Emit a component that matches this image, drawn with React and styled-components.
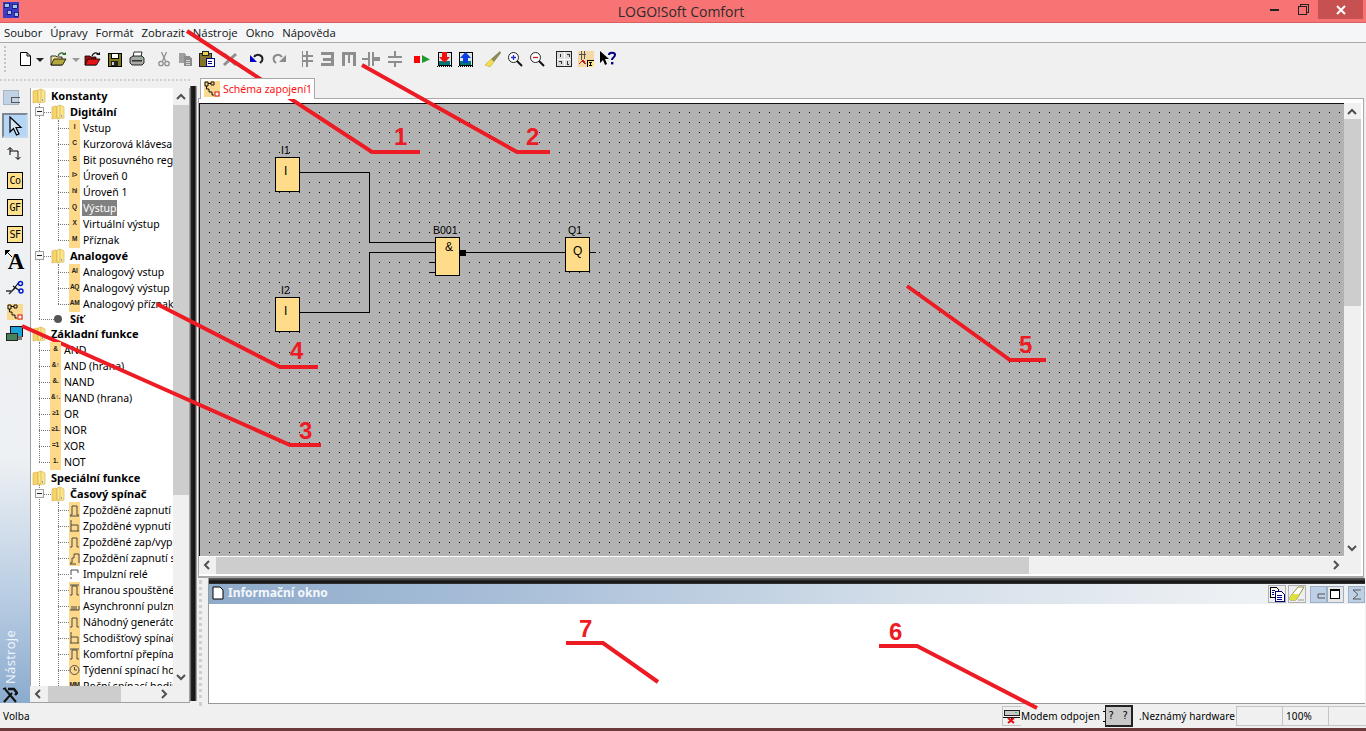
import styled, { createGlobalStyle } from 'styled-components';

const GlobalStyle = createGlobalStyle`
  html, body { margin: 0; padding: 0; height: 100%; overflow: hidden; background: #f0f0f0; }
  * { box-sizing: border-box; }
`;

const uiFont = `"Open Sans", "Noto Sans", "Liberation Sans", sans-serif`;
const treeFont = `"Noto Sans", "Liberation Sans", sans-serif`;

const Window = styled.div`
  position: relative;
  width: 1366px;
  height: 731px;
  display: flex;
  flex-direction: column;
  overflow: hidden;
  font-family: ${uiFont};
  color: #000;
`;

/* ---------- title + menu ---------- */
const TitleBar = styled.div`
  height: 23px;
  flex: none;
  background: #f87373;
  border-bottom: 1px solid #d85f5f;
  display: flex;
  align-items: flex-start;
  position: relative;
`;
const AppIcon = styled.svg`
  width: 16px;
  height: 16px;
  margin: 2px 0 0 3px;
`;
const TitleText = styled.div`
  position: absolute;
  left: 0;
  right: 4px;
  top: 2px;
  text-align: center;
  font-size: 14px;
  line-height: 19px;
  color: #2c2c2c;
`;
const WinButtons = styled.div`
  margin-left: auto;
  margin-right: 3px;
  display: flex;
  position: relative;
`;
const WinButton = styled.div`
  width: ${(p) => p.$w}px;
  height: 19px;
  display: flex;
  align-items: center;
  justify-content: center;
  background: ${(p) => (p.$close ? '#c75050' : 'transparent')};
`;
const MenuBar = styled.div`
  height: 20px;
  flex: none;
  background: #f5f6f8;
  border-bottom: 1px solid #a9a9a9;
  display: flex;
  align-items: center;
  padding-left: 4px;
  gap: 8px;
  font-size: 11.3px;
`;
const MenuItem = styled.span`
  line-height: 18px;
  color: #111;
`;
const Toolbar = styled.div`
  height: 35px;
  flex: none;
  background: #f0f0f0;
  display: flex;
  align-items: flex-start;
  padding-top: 8px;
  position: relative;
`;
const Grip = styled.div`
  position: absolute;
  left: 4px;
  top: 3px;
  width: 2px;
  height: 26px;
  border-left: 2px dotted #c4c4c4;
`;
const Tool = styled.span`
  flex: none;
  display: block;
  width: ${(p) => p.$w}px;
  height: 16px;
  margin-left: ${(p) => p.$gap}px;
  svg { display: block; width: 100%; height: 100%; }
`;

/* ---------- workspace ---------- */
const Workspace = styled.div`
  flex: 1;
  display: flex;
  min-height: 0;
  background: #f0f0f0;
`;
const LeftPane = styled.div`
  width: 190px;
  flex: none;
  display: flex;
  flex-direction: column;
`;
const DotStrip = styled.div`
  height: 10px;
  flex: none;
  margin-top: 1px;
  border-top: 2px dotted #cfcfcf;
`;
const LeftBody = styled.div`
  flex: 1;
  display: flex;
  min-height: 0;
  margin-bottom: 3px;
  margin-top: -1px;
`;
const Rail = styled.div`
  width: 30px;
  flex: none;
  display: flex;
  flex-direction: column;
  padding-top: 2px;
  background: linear-gradient(#f0f0f0 0, #eef1f4 60%, #b6cbe2 84%, #8babce 100%);
`;
const Collapse = styled.div`
  width: 16px;
  height: 15px;
  margin: 0 0 8px 3px;
  background: #c3d3e6;
  border: 1px solid #a6b4c6;
  position: relative;
  &::after {
    content: '';
    position: absolute;
    left: 7px;
    top: 6px;
    width: 8px;
    height: 4px;
    border: 1px solid #555;
    border-right: none;
  }
`;
const RailButton = styled.div`
  width: 26px;
  height: ${(p) => p.$h}px;
  margin-left: 2px;
  display: flex;
  align-items: center;
  justify-content: center;
  position: relative;
  background: ${(p) => (p.$active ? '#b4d5f5' : 'transparent')};
  border: ${(p) => (p.$active ? '2px solid' : 'none')};
  border-color: #7d8793 #c5d9ee #c5d9ee #7d8793;
`;
const CodeBox = styled.div`
  width: 16px;
  height: 17px;
  background: #ffe08c;
  border: 1px solid #000;
  font-family: "DejaVu Sans Mono", monospace;
  font-size: 10px;
  line-height: 15px;
  text-align: center;
  letter-spacing: -0.5px;
`;
const TextToolA = styled.span`
  font-family: "Liberation Serif", serif;
  font-weight: bold;
  font-size: 23px;
  line-height: 20px;
  margin-left: 2px;
`;
const RailLabel = styled.div`
  margin-top: auto;
  writing-mode: vertical-rl;
  transform: rotate(180deg);
  color: #f2f6fb;
  font-size: 13px;
  line-height: 16px;
  margin-left: 2px;
  letter-spacing: 0.3px;
  margin-bottom: 2px;
`;
const RailFoot = styled.div`
  height: 17px;
  padding-left: 2px;
  flex: none;
`;
const TreePanel = styled.div`
  width: 160px;
  flex: none;
  display: grid;
  grid-template-columns: 143px 16px;
  grid-template-rows: 1fr 16px;
  background: #fff;
  border-right: 1px solid #a0a0a0;
  border-bottom: 1px solid #a0a0a0;
  box-shadow: inset 1px 0 0 #a0a0a0;
`;
const TreeBody = styled.div`
  position: relative;
  overflow: hidden;
  font-family: ${treeFont};
  font-size: 10.5px;
  min-width: 0;
`;
const VGuide = styled.div`
  position: absolute;
  left: ${(p) => p.$x}px;
  top: ${(p) => p.$top}px;
  height: ${(p) => p.$h}px;
  border-left: 1px dotted #777;
`;
const Row = styled.div`
  position: relative;
  height: ${(p) => p.$h || 16}px;
  display: flex;
  align-items: center;
  white-space: nowrap;
  padding-left: ${(p) => p.$pad}px;
  &::before {
    content: '';
    display: ${(p) => (p.$elbow ? 'block' : 'none')};
    position: absolute;
    left: ${(p) => p.$elbow}px;
    top: ${(p) => (p.$h || 16) / 2}px;
    width: ${(p) => p.$elbowW}px;
    border-top: 1px dotted #777;
  }
`;
const RowLabel = styled.span`
  margin-left: ${(p) => p.$ml}px;
  font-weight: ${(p) => (p.$bold ? 700 : 400)};
  font-size: ${(p) => (p.$bold ? '11px' : '10.5px')};
  line-height: 16px;
  padding: 0 ${(p) => (p.$selected ? 1 : 0)}px;
  background: ${(p) => (p.$selected ? '#808080' : 'transparent')};
  color: ${(p) => (p.$selected ? '#fff' : '#000')};
`;
const FolderSvg = styled.svg`
  width: 14px;
  height: 16px;
  flex: none;
`;
const Expander = styled.span`
  position: absolute;
  left: 5px;
  top: 3px;
  width: 9px;
  height: 9px;
  background: #f6f6f6;
  border: 1px solid #a0a0a0;
  &::after {
    content: '';
    position: absolute;
    left: 1px;
    top: 3px;
    width: 5px;
    height: 1px;
    background: #222;
  }
`;
const NetDot = styled.span`
  position: absolute;
  left: 24px;
  top: 3px;
  width: 8px;
  height: 8px;
  border-radius: 50%;
  background: #555;
`;
const BlockIcon = styled.span`
  flex: none;
  width: 11px;
  height: 16px;
  background: ${(p) => (p.$plain ? '#fff' : '#ffd98a')};
  display: flex;
  align-items: center;
  justify-content: center;
  font-family: "Liberation Sans", sans-serif;
  font-size: 6.5px;
  font-weight: bold;
  color: #222;
  letter-spacing: -0.3px;
  padding-bottom: 3px;
  position: relative;
  z-index: 1;
  svg { width: 11px; height: 14px; margin-top: 3px; }
`;
const ScrollTrack = styled.div`
  background: #f0f0f0;
  display: flex;
  flex-direction: ${(p) => (p.$horizontal ? 'row' : 'column')};
  align-items: stretch;
  position: relative;
  min-width: 0;
  min-height: 0;
`;
const ScrollThumb = styled.div`
  position: absolute;
  background: #cdcdcd;
  left: ${(p) => (p.$horizontal ? `${p.$from}px` : '0')};
  right: ${(p) => (p.$horizontal ? 'auto' : '0')};
  top: ${(p) => (p.$horizontal ? '0' : `${p.$from}px`)};
  bottom: ${(p) => (p.$horizontal ? '0' : 'auto')};
  width: ${(p) => (p.$horizontal ? `${p.$size}px` : 'auto')};
  height: ${(p) => (p.$horizontal ? 'auto' : `${p.$size}px`)};
`;
const ScrollArrow = styled.svg`
  position: absolute;
  width: 10px;
  height: 10px;
  ${(p) => p.$place}
`;
const Corner = styled.div`
  background: #f0f0f0;
`;
const Splitter = styled.div`
  width: 8px;
  flex: none;
  margin: 8px 0 5px;
  background: linear-gradient(90deg, #8a8a8a 0, #222 18%, #111 55%, #666 75%, #f0f0f0 90%);
`;
const RightPane = styled.div`
  flex: 1;
  min-width: 0;
  display: flex;
  flex-direction: column;
`;
const TabRow = styled.div`
  height: 20px;
  flex: none;
  padding-left: 2px;
  display: flex;
`;
const Tab = styled.div`
  width: 115px;
  height: 21px;
  background: #fff;
  border: 1px solid #a8a8a8;
  border-bottom: none;
  display: flex;
  align-items: center;
  padding-left: 3px;
  gap: 3px;
  position: relative;
  z-index: 1;
  font-family: ${treeFont};
  font-size: 10.5px;
  color: #ff1010;
  white-space: nowrap;
`;
const TabIcon = styled.svg`
  width: 16px;
  height: 16px;
  flex: none;
`;
const Frame = styled.div`
  height: 480px;
  flex: none;
  margin-right: 2px;
  border: 1px solid #a8a8a8;
  border-bottom: none;
  background: #fff;
  padding: 4px 2px 4px 0;
  display: grid;
  grid-template-columns: 1fr 17px;
  grid-template-rows: 1fr 17px;
  box-shadow: inset 0 -2px 0 #a8a8a8;
`;
const Canvas = styled.div`
  position: relative;
  background: #b2b2b2;
  border-top: 1px solid #111;
  border-left: 1px solid #111;
  overflow: hidden;
  min-width: 0;
  margin-bottom: 1px;
`;
const CanvasArt = styled.svg`
  position: absolute;
  left: 0;
  top: 0;
  width: 100%;
  height: 100%;
`;
const FnBlock = styled.div`
  position: absolute;
  left: ${(p) => p.$x}px;
  top: ${(p) => p.$y}px;
  width: 25px;
  height: ${(p) => p.$h}px;
  background: #ffdc8a;
  border: 1px solid #000;
  font-family: "Liberation Sans", sans-serif;
  font-size: 12px;
  line-height: 14px;
  padding-top: ${(p) => p.$pt}px;
  padding-left: ${(p) => p.$pl}px;
`;
const FnLabel = styled.span`
  position: absolute;
  left: ${(p) => p.$x}px;
  top: ${(p) => p.$y}px;
  font-family: "Liberation Sans", sans-serif;
  font-size: 10.5px;
  line-height: 11px;
`;

/* ---------- info window ---------- */
const InfoRow = styled.div`
  flex: 1;
  display: flex;
  min-height: 0;
`;
const InfoGrip = styled.div`
  width: 10px;
  flex: none;
  margin-top: 2px;
  border-left: 3px dotted #cfcfcf;
  margin-left: 1px;
`;
const InfoPanel = styled.div`
  flex: 1;
  min-width: 0;
  display: flex;
  flex-direction: column;
  margin-left: -1px;
  margin-right: 1px;
  margin-bottom: 2px;
  border-left: 1px solid #999;
  border-bottom: 1px solid #999;
`;
const InfoEdge = styled.div`
  height: 6px;
  flex: none;
  background: linear-gradient(#666, #111 60%, #333);
`;
const InfoTitle = styled.div`
  height: 20px;
  flex: none;
  display: flex;
  align-items: center;
  padding: 0 0 3px 3px;
  background: linear-gradient(90deg, #8fabca 0, #a7bed8 25%, #d3dee9 60%, #eef1f4 90%);
  color: #f4f7fb;
  font-family: ${treeFont};
  font-weight: 700;
  font-size: 12px;
  gap: 4px;
`;
const InfoButtons = styled.div`
  margin-left: auto;
  display: flex;
  align-items: center;
  gap: 2px;
  margin-top: 3px;
`;
const InfoTool = styled.div`
  width: 18px;
  height: 18px;
  border: 1px solid #b0b0b0;
  background: #eee;
  svg { display: block; width: 16px; height: 16px; }
`;
const InfoWinButton = styled.div`
  width: 17px;
  height: 17px;
  background: #bdd0e6;
  border: 1px solid #9fb0c4;
  margin-left: ${(p) => p.$ml}px;
  position: relative;
  svg { position: absolute; left: 0; top: 0; width: 15px; height: 15px; }
`;
const InfoBody = styled.div`
  flex: 1;
  background: #fff;
`;

/* ---------- status ---------- */
const StatusBar = styled.div`
  height: 22px;
  flex: none;
  background: #f0f0f0;
  display: flex;
  align-items: flex-start;
  font-family: ${treeFont};
  font-size: 10px;
  letter-spacing: 0.1px;
  line-height: 20px;
  white-space: nowrap;
`;
const StatusText = styled.span`
  padding-left: ${(p) => p.$pl}px;
  width: ${(p) => p.$w}px;
  flex: ${(p) => (p.$grow ? 1 : 'none')};
`;
const StatusCell = styled.div`
  width: ${(p) => p.$w}px;
  height: 20px;
  flex: none;
  display: flex;
  align-items: center;
  padding-left: ${(p) => p.$pl || 0}px;
  border: 1px solid #c4c4c4;
  border-right: none;
`;
const HardwareChip = styled.div`
  width: 28px;
  height: 22px;
  flex: none;
  margin-top: -1px;
  position: relative;
  background: #c8c8c8;
  border: 2px solid #222;
  border-left-width: 1px;
  font-family: "DejaVu Sans Mono", monospace;
  font-size: 10px;
  line-height: 17px;
  text-align: center;
  letter-spacing: 1px;
  &::before {
    content: '';
    position: absolute;
    left: -3px;
    top: 4px;
    width: 2px;
    height: 9px;
    border-top: 1px solid #000;
    border-bottom: 1px solid #000;
  }
`;
const BottomStrip = styled.div`
  height: 3px;
  flex: none;
  background: #6d3a3c;
`;

/* ---------- hand-drawn red annotations ---------- */
const Marks = styled.svg`
  position: absolute;
  left: 0;
  top: 0;
  width: 1366px;
  height: 731px;
  pointer-events: none;
`;
const MarkNumber = styled.text`
  font-family: "Liberation Sans", sans-serif;
  font-weight: bold;
  font-size: 24px;
  fill: #ed1c24;
`;

/* ---------- icons ---------- */
const folder = (
  <FolderSvg viewBox="0 0 14 16">
    <path d="M1 3 L5 2 L6 3 L6 14 L1 15 Z" fill="#f5d46a" stroke="#d3ad48" strokeWidth="0.6" />
    <path d="M6 2 L9 1 L13 3 L13 14 L6 15 Z" fill="#fbe58f" stroke="#d3ad48" strokeWidth="0.6" />
    <path d="M9 1 L9 13 L6 15" fill="none" stroke="#e3c25d" strokeWidth="1" />
    <rect x="10" y="11" width="1" height="2" fill="#7aa7d8" />
  </FolderSvg>
);

const NewIcon = () => (
  <svg viewBox="0 0 14 16"><path d="M2.5 1.5H9L12.5 5V14.5H2.5Z M9 1.5V5H12.5" fill="#fff" stroke="#000" /></svg>
);
const Caret = ({ color }) => (
  <svg viewBox="0 0 8 16"><path d="M0 7H8L4 11Z" fill={color} /></svg>
);
const OpenIcon = ({ body, edge, arrow }) => (
  <svg viewBox="0 0 17 16">
    <path d="M1 5H6L7 6H12V14H1Z" fill={edge} stroke="#000" strokeWidth="0.8" />
    <path d="M1 14L4 8H16L12.5 14Z" fill={body} stroke="#000" strokeWidth="0.8" />
    <path d="M8 5C9 2 12 1 14 3" fill="none" stroke={arrow} strokeWidth="1.2" />
    <path d="M12 4H16V1Z" fill={arrow} />
  </svg>
);
const SaveIcon = () => (
  <svg viewBox="0 0 15 16" shapeRendering="crispEdges">
    <rect x="1" y="2" width="13" height="13" fill="#807a1c" stroke="#000" />
    <rect x="4" y="2" width="7" height="5" fill="#fff" stroke="#000" />
    <rect x="4" y="10" width="7" height="5" fill="#222" />
    <rect x="5" y="11" width="2" height="3" fill="#cfcfcf" />
  </svg>
);
const PrintIcon = () => (
  <svg viewBox="0 0 16 16">
    <path d="M5 1H13L12 6H4Z" fill="#fff" stroke="#000" strokeWidth="0.8" />
    <path d="M1 7L4 5H13L15 7V12L13 14H3L1 12Z" fill="#a8a8a8" stroke="#000" strokeWidth="0.8" />
    <rect x="3" y="9" width="10" height="1.5" fill="#333" />
    <rect x="11" y="7" width="2" height="1" fill="#3bd34a" />
  </svg>
);
const CutIcon = () => (
  <svg viewBox="0 0 14 16" fill="none" stroke="#8e8e8e" strokeWidth="1.3">
    <path d="M4.5 1L8.5 10M9.5 1L5.5 10" />
    <circle cx="4" cy="12.5" r="2.2" />
    <circle cx="10" cy="12.5" r="2.2" />
  </svg>
);
const CopyIcon = () => (
  <svg viewBox="0 0 15 16" shapeRendering="crispEdges">
    <path d="M1 2H6L8 4V12H1Z" fill="#a0a0a0" />
    <path d="M6 5H11L14 8V15H6Z" fill="#8c8c8c" />
    <path d="M8 9H12M8 11H12M8 13H12" stroke="#d5d5d5" />
  </svg>
);
const PasteIcon = () => (
  <svg viewBox="0 0 16 16" shapeRendering="crispEdges">
    <rect x="0" y="2" width="12" height="13" fill="#84742b" stroke="#222" />
    <rect x="3" y="0" width="6" height="4" fill="#e6d44c" stroke="#222" />
    <rect x="7" y="7" width="8" height="8" fill="#fff" stroke="#000080" />
    <path d="M9 10H13M9 12H13" stroke="#000080" />
  </svg>
);
const DeleteIcon = () => (
  <svg viewBox="0 0 16 16"><path d="M2 3L14 14M14 3L2 14" stroke="#8e8e8e" strokeWidth="3" /></svg>
);
const UndoIcon = () => (
  <svg viewBox="0 0 15 16">
    <path d="M4 6C7 2 14 4 12 10L10 12" fill="none" stroke="#222" strokeWidth="2" />
    <path d="M0 4V11H7Z" fill="#0000c8" />
  </svg>
);
const RedoIcon = () => (
  <svg viewBox="0 0 15 16">
    <path d="M11 6C8 2 1 4 3 10L5 12" fill="none" stroke="#8a8a8a" strokeWidth="2" />
    <path d="M15 4V11H8Z" fill="#8a8a8a" />
  </svg>
);
const GrayLogic = ({ d }) => (
  <svg viewBox="0 0 16 16" preserveAspectRatio="none" shapeRendering="crispEdges"><path d={d} fill="#8e8e8e" /></svg>
);
const RunIcon = () => (
  <svg viewBox="0 0 16 16" shapeRendering="crispEdges">
    <rect x="0" y="5" width="6" height="7" fill="#ff0000" />
    <path d="M8 4L16 8.5L8 12Z" fill="#209a30" shapeRendering="auto" />
  </svg>
);
const TransferIcon = ({ color, up }) => (
  <svg viewBox="0 0 15 16" shapeRendering="crispEdges">
    <rect x="1" y="1" width="13" height="13" fill="#dfe8e2" stroke="#000" />
    <rect x="2" y="10" width="11" height="4" fill="#077" />
    <path d="M0 15H15" stroke="#000" strokeDasharray="1 1" />
    <path d={up ? 'M7.5 1L13 7H10V12H5V7H2Z' : 'M5 1H10V6H13L7.5 12L2 6H5Z'} fill={color} shapeRendering="auto" />
  </svg>
);
const BrushIcon = () => (
  <svg viewBox="0 0 16 16">
    <path d="M15 0L6 8L9 11L16 2Z" fill="#8d8a5a" />
    <path d="M6 8L0 14L5 16L9 11Z" fill="#f3dc4e" stroke="#b9a02f" strokeWidth="0.5" />
  </svg>
);
const ZoomIcon = ({ color, plus }) => (
  <svg viewBox="0 0 16 16">
    <circle cx="6.5" cy="6.5" r="5" fill="#fff" stroke="#222" />
    <path d="M10 10L15 15" stroke="#111" strokeWidth="2" />
    <path d={plus ? 'M4 6.5H9M6.5 4V9' : 'M4 6.5H9'} stroke={color} strokeWidth="1.3" />
  </svg>
);
const GridIcon = () => (
  <svg viewBox="0 0 16 16" shapeRendering="crispEdges">
    <rect x="0.5" y="0.5" width="15" height="15" fill="#dcdcdc" stroke="#222" strokeWidth="1" />
    <path d="M8 1V15M1 8H15" stroke="#fff" />
    <path d="M4 3V6M11 3H13V6M3 10H5V13M11 10V13H13" stroke="#333" fill="none" />
  </svg>
);
const SiteIcon = () => (
  <svg viewBox="0 0 16 16" shapeRendering="crispEdges">
    <path d="M0 0H16V16H0Z" fill="#f4d9a4" />
    <path d="M3 0V8M6 0V8M1 3H8M3 8L7 13" stroke="#555" fill="none" />
    <rect x="9" y="9" width="7" height="7" fill="#ffe48a" stroke="#000" />
    <path d="M11 11H14M12.5 11V14M11 14H14" stroke="#000" />
    <path d="M1 13L5 9L8 13" stroke="#e01010" fill="none" />
  </svg>
);
const HelpIcon = () => (
  <svg viewBox="0 0 16 16">
    <path d="M0 0V12L3 9L5 14L7 13L5 8H9Z" fill="#000" />
    <path d="M9 4C9 1 15 1 15 4C15 6.5 12 6 12 9" fill="none" stroke="#000080" strokeWidth="2" />
    <rect x="11" y="11" width="2.4" height="2.4" fill="#000080" />
  </svg>
);
const SchemeIcon = () => (
  <>
    <rect width="16" height="16" fill="#fbd98f" />
    <path d="M1 1H4V5H1Z M7 1H10V4H7Z M4 2.5H7 M2.5 5V8H5V11H8V14H10" fill="none" stroke="#111" />
    <rect x="11" y="11" width="4" height="4" fill="#fff" stroke="#e01010" />
  </>
);

const toolbarItems = [
  { x: 18, w: 14, el: <NewIcon /> },
  { x: 36, w: 8, el: <Caret color="#222" /> },
  { x: 50, w: 17, el: <OpenIcon body="#b3a83e" edge="#f3e9a0" arrow="#2a6a2a" /> },
  { x: 72, w: 8, el: <Caret color="#999" /> },
  { x: 84, w: 17, el: <OpenIcon body="#e51414" edge="#a01010" arrow="#111" /> },
  { x: 107, w: 15, el: <SaveIcon /> },
  { x: 129, w: 16, el: <PrintIcon /> },
  { x: 157, w: 14, el: <CutIcon /> },
  { x: 178, w: 15, el: <CopyIcon /> },
  { x: 199, w: 16, el: <PasteIcon /> },
  { x: 222, w: 16, el: <DeleteIcon /> },
  { x: 250, w: 15, el: <UndoIcon /> },
  { x: 271, w: 15, el: <RedoIcon /> },
  { x: 299, w: 14, el: <GrayLogic d="M3 0H5V4H8V0H10V4H16V6H10V9H16V11H10V16H8V11H5V16H3V0Z M5 6V9H8V6Z" /> },
  { x: 321, w: 13, el: <GrayLogic d="M0 1H16V15H0V12H12V9.5H3V6.5H12V4H0Z" /> },
  { x: 342, w: 14, el: <GrayLogic d="M0 1H16V15H13V4H9.5V12H6.5V4H3V15H0Z" /> },
  { x: 362, w: 18, el: <GrayLogic d="M0 7H5V1H7V15H5V9H0Z M9 1H11V6H16V10H11V15H9Z" /> },
  { x: 387, w: 16, el: <GrayLogic d="M7 0H9V5H15V7H1V5H7Z M1 10H15V12H9V16H7V12H1Z" /> },
  { x: 414, w: 16, el: <RunIcon /> },
  { x: 437, w: 15, el: <TransferIcon color="#ee1111" /> },
  { x: 458, w: 15, el: <TransferIcon color="#0a3ee0" up /> },
  { x: 485, w: 16, el: <BrushIcon /> },
  { x: 507, w: 16, el: <ZoomIcon color="#1f2fd0" plus /> },
  { x: 529, w: 16, el: <ZoomIcon color="#d01f1f" /> },
  { x: 556, w: 16, el: <GridIcon /> },
  { x: 578, w: 16, el: <SiteIcon /> },
  { x: 600, w: 16, el: <HelpIcon /> },
];

/* little pulse glyphs of the timer blocks */
const pulse = (d) => (
  <svg viewBox="0 0 11 14"><path d={d} fill="none" stroke="#4a4a4a" strokeWidth="1" /></svg>
);
const pulses = {
  on: pulse('M1 12H3V3H8V12H10M1 13H10'),
  off: pulse('M2 1V12M2 6H9V12M1 12H10'),
  onOff: pulse('M1 12H3V3H8V12H10'),
  mem: pulse('M1 12H3V7H5V3H10V12M1 13H7'),
  rel: pulse('M2 8V3H9V6M2 10V12'),
  edge: pulse('M1 12H3V3H8V12H10M1 2H10'),
  async: pulse('M1 11H10V7M3 11V7M5 11V7M7 11V7'),
  clock: (
    <svg viewBox="0 0 11 14">
      <circle cx="5.5" cy="7" r="4.5" fill="none" stroke="#4a4a4a" />
      <path d="M5.5 4V7H8" fill="none" stroke="#4a4a4a" />
    </svg>
  ),
};

const Root = ({ children }) => (
  <Row $pad={2}>
    {folder}
    <RowLabel $ml={5} $bold>{children}</RowLabel>
  </Row>
);
const Group = ({ children }) => (
  <Row $pad={21} $elbow={14} $elbowW={7}>
    <Expander />
    {folder}
    <RowLabel $ml={5} $bold>{children}</RowLabel>
  </Row>
);
const Leaf = ({ glyph, plain, selected, children }) => (
  <Row $pad={39} $elbow={28} $elbowW={11}>
    <BlockIcon $plain={plain}>{glyph}</BlockIcon>
    <RowLabel $ml={selected ? 2 : 3} $selected={selected}>{children}</RowLabel>
  </Row>
);
const FnLeaf = ({ glyph, children }) => (
  <Row $pad={20} $elbow={9} $elbowW={11}>
    <BlockIcon>{glyph}</BlockIcon>
    <RowLabel $ml={3}>{children}</RowLabel>
  </Row>
);

const chevron = (dir) =>
  ({
    up: 'M1 7L5 3L9 7',
    down: 'M1 3L5 7L9 3',
    left: 'M7 1L3 5L7 9',
    right: 'M3 1L7 5L3 9',
  })[dir];
const Arrow = ({ dir, place }) => (
  <ScrollArrow viewBox="0 0 10 10" $place={place}>
    <path d={chevron(dir)} fill="none" stroke="#505050" strokeWidth="2" />
  </ScrollArrow>
);

const CX = 200;
const CY = 104;
const blocks = [
  { x: 275, y: 157, h: 35, pt: 6, pl: 8, t: 'I', lx: 281, ly: 145, l: 'I1' },
  { x: 275, y: 297, h: 35, pt: 6, pl: 8, t: 'I', lx: 281, ly: 285, l: 'I2' },
  { x: 435, y: 237, h: 39, pt: 2, pl: 9, t: '&', lx: 433, ly: 225, l: 'B001' },
  { x: 565, y: 237, h: 35, pt: 6, pl: 7, t: 'Q', lx: 568, ly: 225, l: 'Q1' },
];
const wires = [
  'M300 172.5H369.5V242.5H435',
  'M300 312.5H369.5V252.5H435',
  'M429 262.5H435M429 272.5H435',
  'M465 252.5H565M590 252.5H596',
];

const marks = [
  { d: 'M187 31L372 152H420', n: '1', x: 394, y: 145 },
  { d: 'M362 65L517 152H550', n: '2', x: 526, y: 145 },
  { d: 'M22 326L290 445H321', n: '3', x: 299, y: 439 },
  { d: 'M157 304L280 367H318', n: '4', x: 290, y: 359 },
  { d: 'M907 286L1010 360H1046', n: '5', x: 1019, y: 353 },
  { d: 'M1037 708L917 646H879', n: '6', x: 889, y: 640 },
  { d: 'M566 643H603L658 682', n: '7', x: 579, y: 637 },
];

export default function App() {
  let toolEnd = 0;
  return (
    <>
      <GlobalStyle />
      <Window>
        <TitleBar>
          <AppIcon viewBox="0 0 16 16" shapeRendering="crispEdges">
            <rect width="16" height="16" fill="#3b3bc8" />
            <path d="M1 1H6V5H1Z M9 2H14V6H9Z M4 8H8V12H4Z M11 10H15V14H11Z" fill="#9ec4f2" stroke="#101060" strokeWidth="0.8" />
          </AppIcon>
          <TitleText>LOGO!Soft Comfort</TitleText>
          <WinButtons>
            <WinButton $w={29}>
              <svg width="10" height="3"><rect width="9" height="2" y="1" fill="#222" /></svg>
            </WinButton>
            <WinButton $w={29}>
              <svg width="11" height="11" shapeRendering="crispEdges">
                <path d="M2.5 2.5V0.5H10.5V8.5H8.5" fill="none" stroke="#222" />
                <rect x="0.5" y="2.5" width="8" height="8" fill="none" stroke="#222" strokeWidth="1" />
              </svg>
            </WinButton>
            <WinButton $w={45} $close>
              <svg width="10" height="10"><path d="M1 1L9 9M9 1L1 9" stroke="#fff" strokeWidth="2" /></svg>
            </WinButton>
          </WinButtons>
        </TitleBar>

        <MenuBar>
          {['Soubor', 'Úpravy', 'Formát', 'Zobrazit', 'Nástroje', 'Okno', 'Nápověda'].map((m) => (
            <MenuItem key={m}>{m}</MenuItem>
          ))}
        </MenuBar>

        <Toolbar>
          <Grip />
          {toolbarItems.map((t) => {
            const gap = t.x - toolEnd;
            toolEnd = t.x + t.w;
            return (
              <Tool key={t.x} $w={t.w} $gap={gap}>
                {t.el}
              </Tool>
            );
          })}
        </Toolbar>

        <Workspace>
          <LeftPane>
            <DotStrip />
            <LeftBody>
              <Rail>
                <Collapse />
                <RailButton $h={25} $active>
                  <svg width="16" height="20" viewBox="0 0 16 20">
                    <path d="M3 1V16L6.5 12.5L9.5 19L12 18L9 11.5H14Z" fill="#d6e7f8" stroke="#000" strokeWidth="1.2" />
                  </svg>
                </RailButton>
                <RailButton $h={29}>
                  <svg width="18" height="16" viewBox="0 0 18 16" fill="none" stroke="#000">
                    <path d="M4 10V3M1.5 5L4 2.5L6.5 5M4 6H12V14M9.5 12L12 14.5L14.5 12" />
                  </svg>
                </RailButton>
                <RailButton $h={27}><CodeBox>Co</CodeBox></RailButton>
                <RailButton $h={27}><CodeBox>GF</CodeBox></RailButton>
                <RailButton $h={27}><CodeBox>SF</CodeBox></RailButton>
                <RailButton $h={27}>
                  <TextToolA>A</TextToolA>
                  <svg width="7" height="7" viewBox="0 0 7 7" style={{ position: 'absolute', left: 3, top: 2 }}>
                    <path d="M0 0H5L0 5Z M2 2L7 7" fill="#000" stroke="#000" />
                  </svg>
                </RailButton>
                <RailButton $h={26}>
                  <svg width="20" height="16" viewBox="0 0 20 16" fill="none">
                    <path d="M1 11H7M11 7L4 14" stroke="#333" strokeWidth="1.4" />
                    <path d="M8 10L14 2M8 6L15 11" stroke="#111" strokeWidth="1.2" />
                    <circle cx="15.5" cy="3.5" r="2" stroke="#0018c8" strokeWidth="1.4" />
                    <circle cx="16" cy="11" r="2" stroke="#0018c8" strokeWidth="1.4" />
                  </svg>
                </RailButton>
                <RailButton $h={21}>
                  <TabIcon viewBox="0 0 16 16"><SchemeIcon /></TabIcon>
                </RailButton>
                <RailButton $h={21}>
                  <svg width="18" height="16" viewBox="0 0 18 16" shapeRendering="crispEdges">
                    <rect x="4" y="1" width="12" height="10" fill="#1aa3d8" stroke="#111" />
                    <rect x="0" y="8" width="11" height="7" fill="#48825c" stroke="#222" />
                    <rect x="12" y="11" width="4" height="4" fill="#777" />
                  </svg>
                </RailButton>
                <RailLabel>Nástroje</RailLabel>
                <RailFoot>
                  <svg width="16" height="16" viewBox="0 0 16 16" fill="none" stroke="#111" strokeWidth="2">
                    <path d="M2 15L10 6M3 2L14 15" />
                    <path d="M6 2H12L15 6L13 8" strokeWidth="2.4" />
                    <path d="M1 2L4 1" strokeWidth="1.6" />
                  </svg>
                </RailFoot>
              </Rail>

              <TreePanel>
                <TreeBody>
                  <VGuide $x={9} $top={16} $h={215} />
                  <VGuide $x={9} $top={254} $h={120} />
                  <VGuide $x={9} $top={396} $h={230} />
                  <VGuide $x={28} $top={32} $h={120} />
                  <VGuide $x={28} $top={176} $h={40} />
                  <VGuide $x={28} $top={414} $h={200} />
                  <Root>Konstanty</Root>
                  <Group>Digitální</Group>
                  <Leaf glyph="I">Vstup</Leaf>
                  <Leaf glyph="C">Kurzorová klávesa</Leaf>
                  <Leaf glyph="S">Bit posuvného registru</Leaf>
                  <Leaf glyph="I>">Úroveň 0</Leaf>
                  <Leaf glyph="hi">Úroveň 1</Leaf>
                  <Leaf glyph="Q" selected>Výstup</Leaf>
                  <Leaf glyph="X">Virtuální výstup</Leaf>
                  <Leaf glyph="M">Příznak</Leaf>
                  <Group>Analogové</Group>
                  <Leaf glyph="AI">Analogový vstup</Leaf>
                  <Leaf glyph="AQ">Analogový výstup</Leaf>
                  <Leaf glyph="AM">Analogový příznak</Leaf>
                  <Row $h={14} $pad={40} $elbow={9} $elbowW={17}>
                    <NetDot />
                    <RowLabel $ml={0} $bold>Síť</RowLabel>
                  </Row>
                  <Root>Základní funkce</Root>
                  <FnLeaf glyph="&">AND</FnLeaf>
                  <FnLeaf glyph="&↑">AND (hrana)</FnLeaf>
                  <FnLeaf glyph="&.">NAND</FnLeaf>
                  <FnLeaf glyph="&↑.">NAND (hrana)</FnLeaf>
                  <FnLeaf glyph="≥1">OR</FnLeaf>
                  <FnLeaf glyph="≥1.">NOR</FnLeaf>
                  <FnLeaf glyph="=1">XOR</FnLeaf>
                  <FnLeaf glyph="1.">NOT</FnLeaf>
                  <Root>Speciální funkce</Root>
                  <Group>Časový spínač</Group>
                  <Leaf glyph={pulses.on}>Zpožděné zapnutí</Leaf>
                  <Leaf glyph={pulses.off}>Zpožděné vypnutí</Leaf>
                  <Leaf glyph={pulses.onOff}>Zpožděné zap/vyp</Leaf>
                  <Leaf glyph={pulses.mem}>Zpoždění zapnutí s pamětí</Leaf>
                  <Leaf glyph={pulses.rel} plain>Impulzní relé</Leaf>
                  <Leaf glyph={pulses.edge}>Hranou spouštěné relé</Leaf>
                  <Leaf glyph={pulses.async}>Asynchronní pulzní generátor</Leaf>
                  <Leaf glyph={pulses.onOff}>Náhodný generátor</Leaf>
                  <Leaf glyph={pulses.off}>Schodišťový spínač</Leaf>
                  <Leaf glyph={pulses.edge}>Komfortní přepínač</Leaf>
                  <Leaf glyph={pulses.clock}>Týdenní spínací hodiny</Leaf>
                  <Leaf glyph="MM">Roční spínací hodiny</Leaf>
                </TreeBody>
                <ScrollTrack>
                  <ScrollThumb $from={17} $size={390} />
                  <Arrow dir="up" place="top: 4px; left: 3px;" />
                  <Arrow dir="down" place="bottom: 4px; left: 3px;" />
                </ScrollTrack>
                <ScrollTrack $horizontal>
                  <ScrollThumb $horizontal $from={18} $size={73} />
                  <Arrow dir="left" place="top: 3px; left: 3px;" />
                  <Arrow dir="right" place="top: 3px; right: 4px;" />
                </ScrollTrack>
                <Corner />
              </TreePanel>
            </LeftBody>
          </LeftPane>

          <Splitter />

          <RightPane>
            <TabRow>
              <Tab>
                <TabIcon viewBox="0 0 16 16"><SchemeIcon /></TabIcon>
                Schéma zapojení1
              </Tab>
            </TabRow>
            <Frame>
              <Canvas>
                <CanvasArt>
                  <defs>
                    <pattern id="dots" width="10" height="10" patternUnits="userSpaceOnUse">
                      <rect x="9" y="8" width="1" height="1" fill="#000" />
                    </pattern>
                  </defs>
                  <rect width="100%" height="100%" fill="url(#dots)" />
                  <g transform={`translate(${-CX} ${-CY})`} fill="none" stroke="#000" shapeRendering="crispEdges">
                    {wires.map((d) => (
                      <path key={d} d={d} />
                    ))}
                    <rect x="460" y="250" width="5" height="5" fill="#000" />
                  </g>
                </CanvasArt>
                {blocks.map((b) => (
                  <FnBlock key={b.l} $x={b.x - CX} $y={b.y - CY} $h={b.h} $pt={b.pt} $pl={b.pl}>
                    {b.t}
                  </FnBlock>
                ))}
                {blocks.map((b) => (
                  <FnLabel key={b.l} $x={b.lx - CX} $y={b.ly - CY}>{b.l}</FnLabel>
                ))}
              </Canvas>
              <ScrollTrack>
                <ScrollThumb $from={16} $size={187} />
                <Arrow dir="up" place="top: 4px; left: 3px;" />
                <Arrow dir="down" place="bottom: 4px; left: 3px;" />
              </ScrollTrack>
              <ScrollTrack $horizontal>
                <ScrollThumb $horizontal $from={17} $size={813} />
                <Arrow dir="left" place="top: 3px; left: 3px;" />
                <Arrow dir="right" place="top: 3px; right: 3px;" />
              </ScrollTrack>
              <Corner />
            </Frame>
            <InfoRow>
              <InfoGrip />
              <InfoPanel>
                <InfoEdge />
                <InfoTitle>
                  <svg width="12" height="14" viewBox="0 0 12 14">
                    <path d="M1 1H8L11 4V13H1Z" fill="#fff" stroke="#000" />
                  </svg>
                  Informační okno
                  <InfoButtons>
                    <InfoTool>
                      <svg viewBox="0 0 16 16" shapeRendering="crispEdges">
                        <path d="M1 1H7L9 3V11H1Z" fill="#fff" stroke="#000" />
                        <path d="M6 5H12L15 8V15H6Z" fill="#fff" stroke="#000080" />
                        <path d="M8 9H13M8 11H13M8 13H13M3 4H6M3 6H5M3 8H5" stroke="#000080" />
                      </svg>
                    </InfoTool>
                    <InfoTool>
                      <svg viewBox="0 0 16 16">
                        <path d="M1 11L9 1H15L7 14H1Z" fill="#fff" stroke="#97923a" />
                        <path d="M1 11L4 8H10L7 14H1Z" fill="#dfe23c" />
                        <path d="M9 14H15" stroke="#999" />
                      </svg>
                    </InfoTool>
                    <InfoWinButton $ml={2}>
                      <svg viewBox="0 0 15 15" fill="none" stroke="#555"><path d="M14 7H7V11H14" /></svg>
                    </InfoWinButton>
                    <InfoWinButton $ml={-2}>
                      <svg viewBox="0 0 15 15" fill="none" shapeRendering="crispEdges">
                        <rect width="15" height="15" fill="#e6e6e6" />
                        <rect x="2.5" y="2.5" width="9" height="9" stroke="#000" fill="#fff" />
                        <path d="M3 3.5H11" stroke="#000" />
                      </svg>
                    </InfoWinButton>
                    <InfoWinButton $ml={2}>
                      <svg viewBox="0 0 15 15" fill="none" stroke="#555"><path d="M4 3H12M4 3L9 7.5L4 12H12" /></svg>
                    </InfoWinButton>
                  </InfoButtons>
                </InfoTitle>
                <InfoBody />
              </InfoPanel>
            </InfoRow>
          </RightPane>
        </Workspace>

        <StatusBar>
          <StatusText $pl={3} $grow>Volba</StatusText>
          <StatusCell $w={19}>
            <svg width="17" height="16" viewBox="0 0 17 16" shapeRendering="crispEdges">
              <rect x="1" y="2" width="15" height="5" fill="#c8c8c8" stroke="#222" />
              <rect x="12" y="4" width="2" height="1" fill="#2ccd3c" />
              <path d="M0 9H17M8 9V12" stroke="#111" />
              <path d="M5 10L11 15M11 10L5 15" stroke="#e01010" strokeWidth="2" shapeRendering="auto" />
            </svg>
          </StatusCell>
          <StatusText $w={84}>Modem odpojen</StatusText>
          <HardwareChip>? ?</HardwareChip>
          <StatusText $pl={6} $w={103}>.Neznámý hardware</StatusText>
          <StatusCell $w={46} />
          <StatusCell $w={46} $pl={3}>100%</StatusCell>
          <StatusCell $w={38} />
        </StatusBar>
        <BottomStrip />

        <Marks viewBox="0 0 1366 731">
          {marks.map((m) => (
            <g key={m.n}>
              <path d={m.d} fill="none" stroke="#ed1c24" strokeWidth="4" />
              <MarkNumber x={m.x} y={m.y}>{m.n}</MarkNumber>
            </g>
          ))}
        </Marks>
      </Window>
    </>
  );
}
